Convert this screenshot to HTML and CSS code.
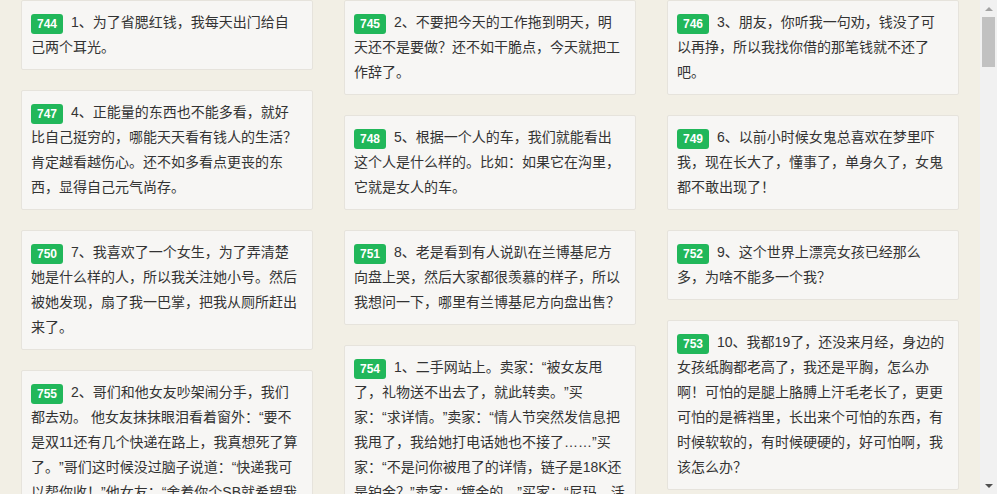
FILE: index.html
```html
<!DOCTYPE html>
<html lang="zh-CN">
<head>
<meta charset="utf-8">
<title>段子</title>
<link rel="stylesheet" href="styles.css">
</head>
<body>
<div class="viewport">
  <div class="wall">
    <div class="col">
      <div class="card"><span class="num">744</span>1、为了省腮红钱，我每天出门给自己两个耳光。</div>
      <div class="card"><span class="num">747</span>4、正能量的东西也不能多看，就好比自己挺穷的，哪能天天看有钱人的生活？肯定越看越伤心。还不如多看点更丧的东西，显得自己元气尚存。</div>
      <div class="card"><span class="num">750</span>7、我喜欢了一个女生，为了弄清楚她是什么样的人，所以我关注她小号。然后被她发现，扇了我一巴掌，把我从厕所赶出来了。</div>
      <div class="card"><span class="num">755</span>2、哥们和他女友吵架闹分手，我们都去劝。 他女友抹抹眼泪看着窗外：“要不是双11还有几个快递在路上，我真想死了算了。”哥们这时候没过脑子说道：“快递我可以帮你收！”他女友：“舍着你个SB就希望我死是吧？”</div>
    </div>
    <div class="col">
      <div class="card"><span class="num">745</span>2、不要把今天的工作拖到明天，明天还不是要做？还不如干脆点，今天就把工作辞了。</div>
      <div class="card"><span class="num">748</span>5、根据一个人的车，我们就能看出这个人是什么样的。比如：如果它在沟里，它就是女人的车。</div>
      <div class="card"><span class="num">751</span>8、老是看到有人说趴在兰博基尼方向盘上哭，然后大家都很羡慕的样子，所以我想问一下，哪里有兰博基尼方向盘出售？</div>
      <div class="card"><span class="num">754</span>1、二手网站上。卖家：“被女友甩了，礼物送不出去了，就此转卖。”买家：“求详情。”卖家：“情人节突然发信息把我甩了，我给她打电话她也不接了……”买家：“不是问你被甩了的详情，链子是18K还是铂金？”卖家：“镀金的。”买家：“尼玛，活该被甩！”</div>
    </div>
    <div class="col">
      <div class="card"><span class="num">746</span>3、朋友，你听我一句劝，钱没了可以再挣，所以我找你借的那笔钱就不还了吧。</div>
      <div class="card"><span class="num">749</span>6、以前小时候女鬼总喜欢在梦里吓我，现在长大了，懂事了，单身久了，女鬼都不敢出现了！</div>
      <div class="card"><span class="num">752</span>9、这个世界上漂亮女孩已经那么多，为啥不能多一个我？</div>
      <div class="card"><span class="num">753</span>10、我都19了，还没来月经，身边的女孩纸胸都老高了，我还是平胸，怎么办啊！可怕的是腿上胳膊上汗毛老长了，更更可怕的是裤裆里，长出来个可怕的东西，有时候软软的，有时候硬硬的，好可怕啊，我该怎么办？</div>
    </div>
  </div>
</div>
<div class="scrollbar">
  <div class="sb-btn"><span class="arrow-up"></span></div>
  <div class="sb-thumb"></div>
  <div class="sb-track"></div>
  <div class="sb-btn"><span class="arrow-down"></span></div>
</div>
</body>
</html>
```

FILE: styles.css
```css
html, body {
  margin: 0;
  padding: 0;
  height: 100%;
}
body {
  display: flex;
  overflow: hidden;
  background: #f2efe5;
  font-family: "Liberation Sans", "Noto Sans CJK SC", sans-serif;
  font-size: 14px;
  color: #333;
}
.viewport {
  flex: 1 1 auto;
  height: 100%;
  overflow: hidden;
}
.wall {
  width: 938px;
  margin: 0 auto;
  display: flex;
  gap: 31px;
  align-items: flex-start;
}
.col {
  flex: 0 0 292px;
  display: flex;
  flex-direction: column;
  gap: 20px;
}
.card {
  background: #f7f6f4;
  border: 1px solid #e6e3dc;
  border-radius: 2px;
  padding: 9px 10px 9px 9px;
  line-height: 25px;
  text-spacing-trim: space-all;
  line-break: strict;
}
.num {
  display: inline-block;
  background: #21b75a;
  color: #fff;
  font-weight: bold;
  font-size: 12px;
  line-height: 20px;
  height: 20px;
  padding: 0 6px;
  border-radius: 3px;
  margin-right: 8px;
  position: relative;
  top: 1px;
}
.scrollbar {
  flex: 0 0 17px;
  height: 100%;
  background: #f1f1f1;
  display: flex;
  flex-direction: column;
}
.sb-btn {
  height: 17px;
  display: flex;
  align-items: center;
  justify-content: center;
}
.arrow-up {
  width: 0;
  height: 0;
  border-left: 4px solid transparent;
  border-right: 4px solid transparent;
  border-bottom: 4px solid #a3a3a3;
}
.arrow-down {
  width: 0;
  height: 0;
  border-left: 4px solid transparent;
  border-right: 4px solid transparent;
  border-top: 4px solid #505050;
}
.sb-thumb {
  height: 50px;
  margin: 0 2px;
  background: #c1c1c1;
}
.sb-track {
  flex: 1;
}
```
